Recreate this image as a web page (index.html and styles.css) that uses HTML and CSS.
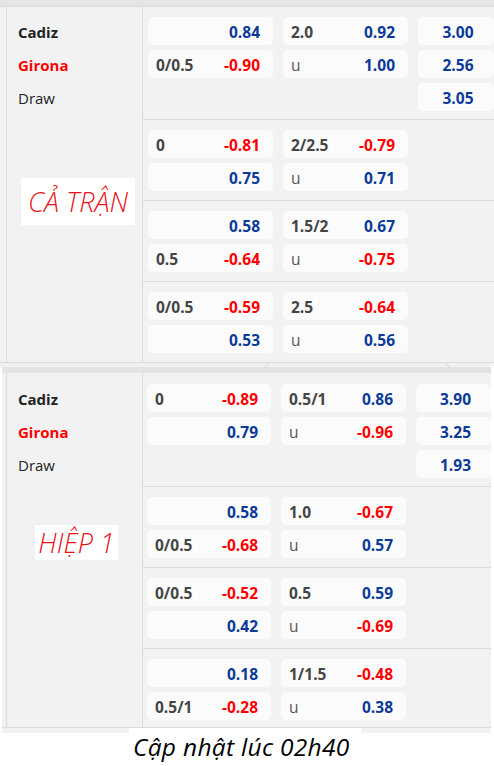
FILE: index.html
```html
<!DOCTYPE html>
<html lang="vi">
<head>
<meta charset="utf-8">
<link rel="stylesheet" href="styles.css">
</head>
<body>
<div class="page">
  <section class="panel p1">
    <div class="topbar"></div>
    <div class="body">
      <div class="side">
        <div class="teams">
          <div class="team home">Cadiz</div>
          <div class="team away">Girona</div>
          <div class="team draw">Draw</div>
        </div>
        <div class="tag tag-full">CẢ TRẬN</div>
      </div>
      <div class="markets">
        <div class="grp first">
          <div class="cell"><span class="h"></span><span class="b">0.84</span></div>
          <div class="cell"><span class="h">2.0</span><span class="b">0.92</span></div>
          <div class="cell x12 b">3.00</div>
          <div class="cell"><span class="h">0/0.5</span><span class="r">-0.90</span></div>
          <div class="cell"><span class="u">u</span><span class="b">1.00</span></div>
          <div class="cell x12 b">2.56</div>
          <div class="empty"></div>
          <div class="empty"></div>
          <div class="cell x12 b">3.05</div>
        </div>
        <div class="grp">
          <div class="cell"><span class="h">0</span><span class="r">-0.81</span></div>
          <div class="cell"><span class="h">2/2.5</span><span class="r">-0.79</span></div>
          <div class="empty"></div>
          <div class="cell"><span class="h"></span><span class="b">0.75</span></div>
          <div class="cell"><span class="u">u</span><span class="b">0.71</span></div>
        </div>
        <div class="grp">
          <div class="cell"><span class="h"></span><span class="b">0.58</span></div>
          <div class="cell"><span class="h">1.5/2</span><span class="b">0.67</span></div>
          <div class="empty"></div>
          <div class="cell"><span class="h">0.5</span><span class="r">-0.64</span></div>
          <div class="cell"><span class="u">u</span><span class="r">-0.75</span></div>
        </div>
        <div class="grp">
          <div class="cell"><span class="h">0/0.5</span><span class="r">-0.59</span></div>
          <div class="cell"><span class="h">2.5</span><span class="r">-0.64</span></div>
          <div class="empty"></div>
          <div class="cell"><span class="h"></span><span class="b">0.53</span></div>
          <div class="cell"><span class="u">u</span><span class="b">0.56</span></div>
        </div>
      </div>
    </div>
    <div class="tabs">
      <span class="tab-edge tab-left"></span>
      <span class="tab-edge tab-right"></span>
    </div>
  </section>

  <section class="panel p2">
    <div class="topbar"></div>
    <div class="body">
      <div class="side">
        <div class="teams">
          <div class="team home">Cadiz</div>
          <div class="team away">Girona</div>
          <div class="team draw">Draw</div>
        </div>
        <div class="tag tag-half">HIỆP 1</div>
      </div>
      <div class="markets">
        <div class="grp first">
          <div class="cell"><span class="h">0</span><span class="r">-0.89</span></div>
          <div class="cell"><span class="h">0.5/1</span><span class="b">0.86</span></div>
          <div class="cell x12 b">3.90</div>
          <div class="cell"><span class="h"></span><span class="b">0.79</span></div>
          <div class="cell"><span class="u">u</span><span class="r">-0.96</span></div>
          <div class="cell x12 b">3.25</div>
          <div class="empty"></div>
          <div class="empty"></div>
          <div class="cell x12 b">1.93</div>
        </div>
        <div class="grp">
          <div class="cell"><span class="h"></span><span class="b">0.58</span></div>
          <div class="cell"><span class="h">1.0</span><span class="r">-0.67</span></div>
          <div class="empty"></div>
          <div class="cell"><span class="h">0/0.5</span><span class="r">-0.68</span></div>
          <div class="cell"><span class="u">u</span><span class="b">0.57</span></div>
        </div>
        <div class="grp">
          <div class="cell"><span class="h">0/0.5</span><span class="r">-0.52</span></div>
          <div class="cell"><span class="h">0.5</span><span class="b">0.59</span></div>
          <div class="empty"></div>
          <div class="cell"><span class="h"></span><span class="b">0.42</span></div>
          <div class="cell"><span class="u">u</span><span class="r">-0.69</span></div>
        </div>
        <div class="grp last">
          <div class="cell"><span class="h"></span><span class="b">0.18</span></div>
          <div class="cell"><span class="h">1/1.5</span><span class="r">-0.48</span></div>
          <div class="empty"></div>
          <div class="cell"><span class="h">0.5/1</span><span class="r">-0.28</span></div>
          <div class="cell"><span class="u">u</span><span class="b">0.38</span></div>
        </div>
      </div>
    </div>
  </section>

  <div class="caption">Cập nhật lúc 02h40</div>
</div>
</body>
</html>
```

FILE: styles.css
```css
* { box-sizing: border-box; }

body {
  margin: 0;
  background: #ffffff;
  font-family: "Open Sans", "Liberation Sans", sans-serif;
}

.page {
  width: 494px;
  height: 766px;
  overflow: hidden;
}

.panel {
  background: #f2f2f2;
}

.p1 {
  width: 494px;
}

.p2 {
  margin-left: 2px;
  width: 489px;
  padding-bottom: 5px;
}

.topbar {
  height: 7px;
  background: #e5e5e5;
  border-bottom: 1px solid #dadada;
}

.p2 .topbar {
  height: 6px;
  border-bottom: none;
  background: #e3e3e3;
}

.tabs {
  height: 4px;
  position: relative;
  background: #f1f1f1;
}

.tab-edge {
  position: absolute;
  top: 0;
  width: 1px;
  height: 5px;
  background: #d4d4d4;
}

.tab-left { left: 266px; transform: skewX(-40deg); }
.tab-right { left: 447px; transform: skewX(40deg); }

.body {
  display: flex;
  border-bottom: 1px solid #dcdcdc;
}

.side {
  margin-left: 6px;
  width: 137px;
  flex: none;
  border-left: 1px solid #dcdcdc;
  border-right: 1px solid #dcdcdc;
  display: flex;
  flex-direction: column;
  align-items: flex-start;
}

.p2 .side {
  margin-left: 4px;
  width: 137px;
}

.teams {
  padding: 10px 0 0 11px;
  display: flex;
  flex-direction: column;
  gap: 5px;
}

.p2 .teams {
  padding-top: 11px;
}

.team {
  height: 28px;
  line-height: 28px;
  font-size: 15px;
  padding-top: 1px;
  color: #222222;
}

.home { font-weight: 700; }
.away { font-weight: 700; color: #ff0000; }
.draw { font-weight: 400; }

.tag {
  background: #ffffff;
  color: #e8141c;
  font-style: italic;
  font-weight: 300;
  font-size: 27px;
  display: flex;
  align-items: center;
  justify-content: center;
}

.tag-full {
  margin: 67px 0 0 14px;
  width: 114px;
  height: 47px;
}

.tag-half {
  margin: 47px 0 0 28px;
  width: 83px;
  height: 35px;
}

.markets {
  flex: 1;
  min-width: 0;
}

.grp {
  display: grid;
  grid-template-columns: 125px 125px 1fr;
  grid-auto-rows: 28px;
  column-gap: 10px;
  row-gap: 5px;
  padding: 10px 0 9px 5px;
}

.p2 .grp {
  grid-template-columns: 124px 125px 1fr;
  padding-left: 4px;
}

.grp + .grp {
  border-top: 1px solid #dcdcdc;
}

.grp.first { padding-bottom: 8px; }
.p2 .grp.first { padding-top: 11px; padding-bottom: 8px; }
.p2 .grp.last { padding-bottom: 7px; }

.cell {
  background: #fbfbfb;
  border-radius: 5px;
  display: flex;
  align-items: center;
  justify-content: space-between;
  padding: 2px 13px 0 8px;
  font-size: 15.5px;
  font-weight: 700;
}

.cell.x12 {
  justify-content: center;
  padding-right: 4px;
}

.b { color: #0b3a97; }
.r { color: #ff0000; }
.h { color: #454545; }
.u { color: #555555; font-weight: 400; }

.caption {
  position: relative;
  margin: -5px 0 0 129px;
  width: 232px;
  height: 38px;
  background: #ffffff;
  color: #000000;
  font-style: italic;
  font-weight: 400;
  font-size: 24.5px;
  letter-spacing: 0.3px;
  padding: 4px 0 0 4px;
  line-height: 30px;
  white-space: nowrap;
}
```
